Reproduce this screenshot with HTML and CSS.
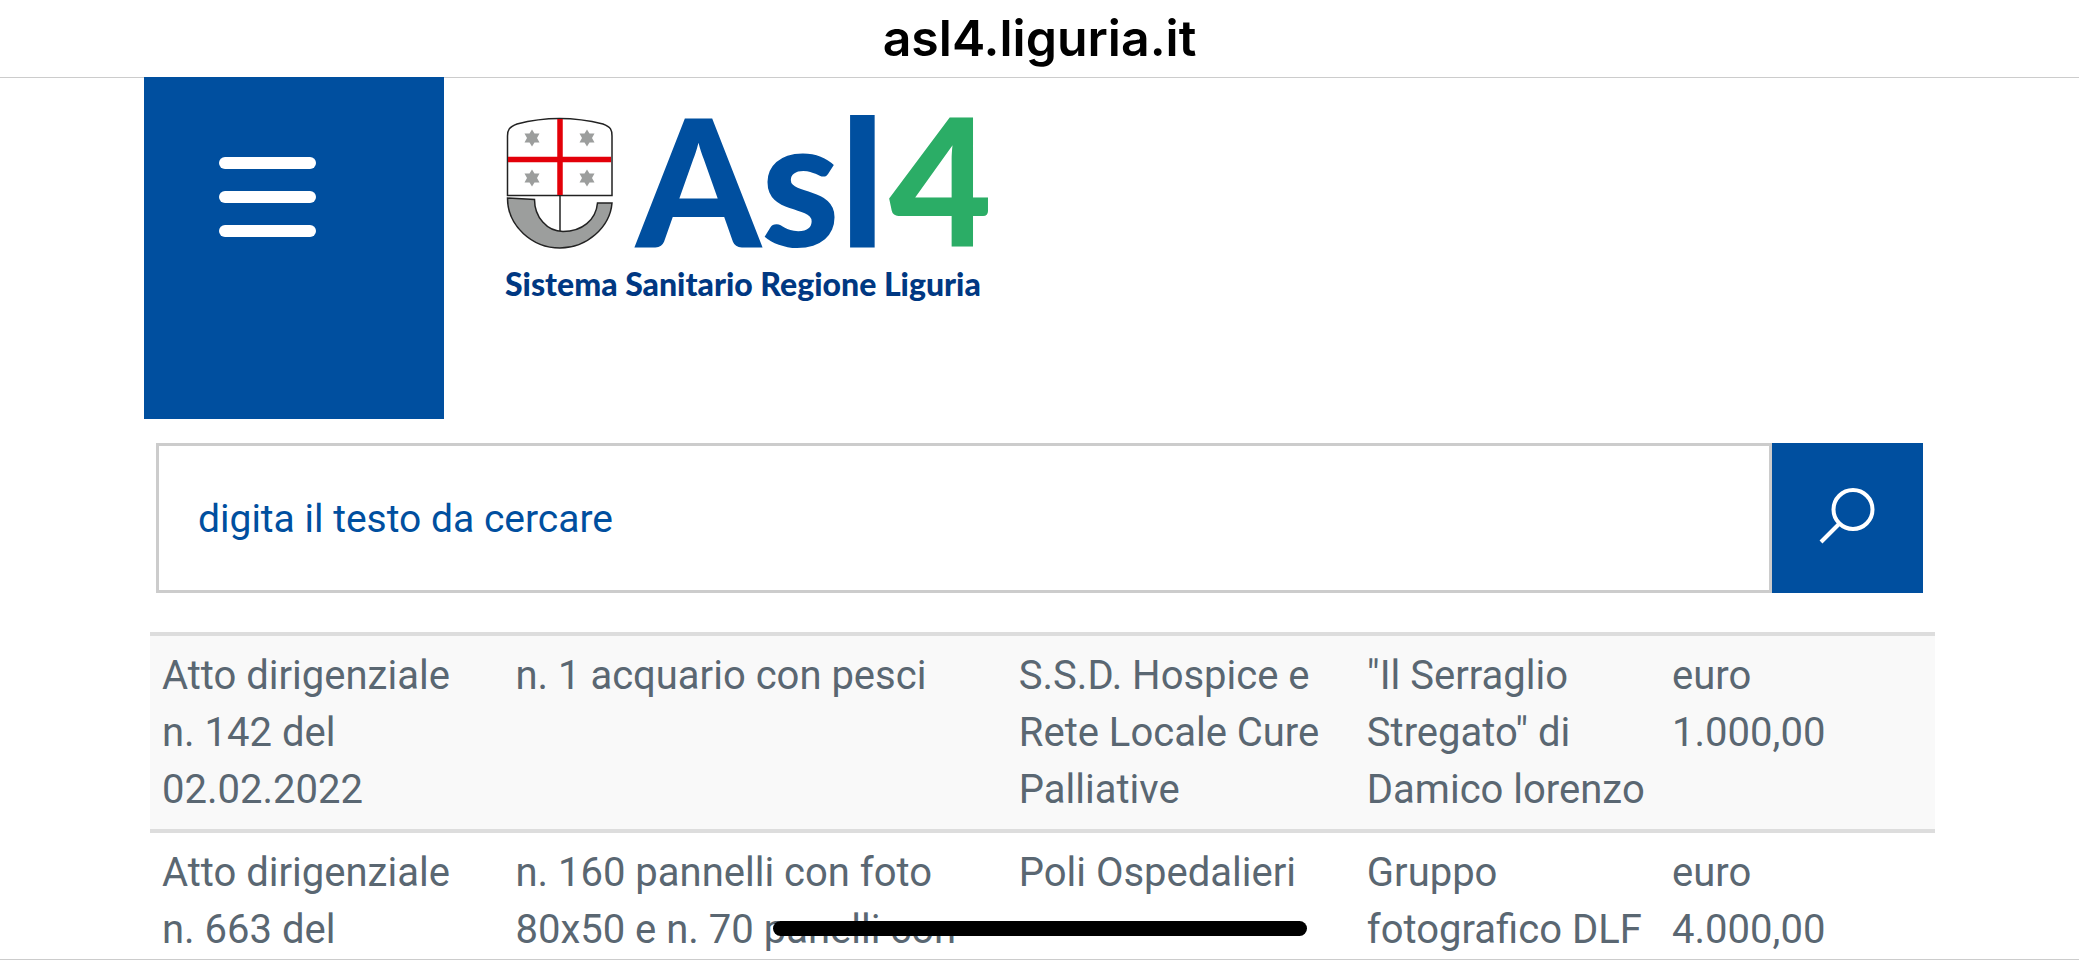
FILE: index.html
```html
<!DOCTYPE html>
<html lang="it">
<head>
    <meta charset="UTF-8">
    <meta name="viewport" content="width=device-width, initial-scale=1">
    <title>Asl4 Liguria</title>
    <link rel="stylesheet" href="styles.css">
</head>
<body>

    <div class="barra-indirizzo">asl4.liguria.it</div>

    <main class="pagina">
        <header class="testata">
            <button type="button" class="menu" aria-label="Menu">
                <span></span>
                <span></span>
                <span></span>
            </button>
            <a href="#" class="logo" aria-label="Asl4">
                <svg width="510" height="260" viewBox="500 60 510 260">
                    <!-- stemma della regione -->
                    <g fill="#fff" stroke="#222" stroke-width="1.5">
                        <path d="M507.500 195.500V136C507.500 130 509 127 517 124Q559 113 603 124C611 127 612 130 612 136V195.500Z"/>
                        <path d="M560 196V231" fill="none"/>
                        <path d="M507.500 198L534.500 199.500C534.500 217 547 231.500 563 231.500C582 231.500 596 220 597.500 203H612C610 227 587 248 560 248C532 248 507.500 226 507.500 198Z" fill="#9c9e9d"/>
                    </g>
                    <path d="M560 119V195M508 159.500H611" stroke="#e30009" stroke-width="5.500"/>
                    <defs>
                        <path id="stella" d="M0-8.500L2.500-4.500L7.500-4.500L5 0L7.500 4.500L2.500 4.500L0 8.500L-2.500 4.500L-7.500 4.500L-5 0L-7.500-4.500L-2.500-4.500Z" fill="#9c9e9d"/>
                    </defs>
                    <use href="#stella" x="532" y="138"/>
                    <use href="#stella" x="587" y="138"/>
                    <use href="#stella" x="532" y="178"/>
                    <use href="#stella" x="587" y="178"/>
                    <text class="logo-nome" x="636" y="247">Asl</text>
                    <text class="logo-numero" x="889" y="247">4</text>
                    <text class="logo-motto" x="505" y="296">Sistema Sanitario Regione Liguria</text>
                </svg>
            </a>
        </header>

        <form class="cerca">
            <input type="text" name="testo" placeholder="digita il testo da cercare" aria-label="digita il testo da cercare">
            <button type="submit" aria-label="Cerca">
                <svg width="58" height="60" viewBox="0 0 58 60" fill="none" stroke="#fff" stroke-width="4">
                    <circle cx="34" cy="21.5" r="19.500"/>
                    <path d="M20 36L2 54"/>
                </svg>
            </button>
        </form>

        <table class="atti">
            <colgroup>
                <col class="col-atto">
                <col class="col-oggetto">
                <col class="col-struttura">
                <col class="col-donante">
                <col>
            </colgroup>
            <tbody>
                <tr>
                    <td>Atto dirigenziale<br>n. 142 del<br>02.02.2022</td>
                    <td>n. 1 acquario con pesci</td>
                    <td>S.S.D. Hospice e<br>Rete Locale Cure<br>Palliative</td>
                    <td>"Il Serraglio<br>Stregato" di<br>Damico lorenzo</td>
                    <td>euro<br>1.000,00</td>
                </tr>
                <tr>
                    <td>Atto dirigenziale<br>n. 663 del</td>
                    <td>n. 160 pannelli con foto<br>80x50 e n. 70 panelli con</td>
                    <td>Poli Ospedalieri</td>
                    <td>Gruppo<br>fotografico DLF</td>
                    <td>euro<br>4.000,00</td>
                </tr>
            </tbody>
        </table>
    </main>

    <div class="indicatore"></div>

</body>
</html>
```
FILE: styles.css
```css
* {
    box-sizing: border-box;
}
body {
    display: flex;
    flex-direction: column;
    height: 100vh;
    margin: 0;
    overflow: hidden;
    background-color: #fff;
    color: #5a6772;
    font-family: Roboto, "Open Sans", sans-serif;
    font-size: 40px;
    line-height: 57px;
}
button {
    border: none;
    background-color: #004f9f;
    cursor: pointer;
}
.barra-indirizzo {
    flex: none;
    height: 78px;
    padding-top: 10px;
    border-bottom: 1px solid #ccc;
    color: #000;
    font-family: Inter, sans-serif;
    font-size: 50px;
    font-weight: 600;
    text-align: center;
}
.pagina {
    flex: 1;
    min-height: 0;
    margin-top: -1px;
    padding: 0 144px;
    border-bottom: 1px solid #ccc;
}

/* testata */
.testata {
    display: flex;
    height: 342px;
}
.menu {
    display: flex;
    flex-direction: column;
    gap: 22px;
    width: 300px;
    padding: 80px 75px;
}
.menu span {
    width: 97px;
    height: 12px;
    border-radius: 6px;
    background-color: #fff;
}
.logo {
    margin-top: -17px;
    padding: 0 56px;
}
.logo svg {
    display: block;
}
.logo text {
    font-family: Lato, sans-serif;
    font-weight: 900;
}
.logo-nome,
.logo-numero {
    font-size: 178px;
}
.logo-nome {
    fill: #004f9f;
}
.logo-numero {
    fill: #2bad66;
}
.logo-motto {
    fill: #003882;
    font-size: 32px;
}

/* ricerca */
.cerca {
    display: flex;
    height: 150px;
    margin: 24px 12px 39px;
}
.cerca input {
    flex: 1;
    min-width: 0;
    padding: 0 39px;
    border: 3px solid #ccc;
    border-radius: 0;
    font: inherit;
}
.cerca input::placeholder {
    color: #004f9f;
    opacity: 1;
    font-size: 39px;
}
.cerca button {
    display: flex;
    align-items: center;
    justify-content: center;
    width: 151px;
    padding: 0;
}

/* tabella */
.atti {
    width: calc(100% - 6px);
    margin-left: 6px;
    border-spacing: 0;
    table-layout: fixed;
}
.col-atto {
    width: 19.8%;
}
.col-oggetto {
    width: 28.2%;
}
.col-struttura {
    width: 19.5%;
}
.col-donante {
    width: 17.1%;
}
.atti td {
    padding: 11px 0 11px 12px;
    border-top: 4px solid #ddd;
    vertical-align: top;
    white-space: nowrap;
}
.atti tr:nth-child(odd) td {
    background-color: #f9f9f9;
}

.indicatore {
    position: fixed;
    bottom: 24px;
    left: 50%;
    width: 534px;
    height: 15px;
    margin-left: -267px;
    border-radius: 8px;
    background-color: #000;
}
```
